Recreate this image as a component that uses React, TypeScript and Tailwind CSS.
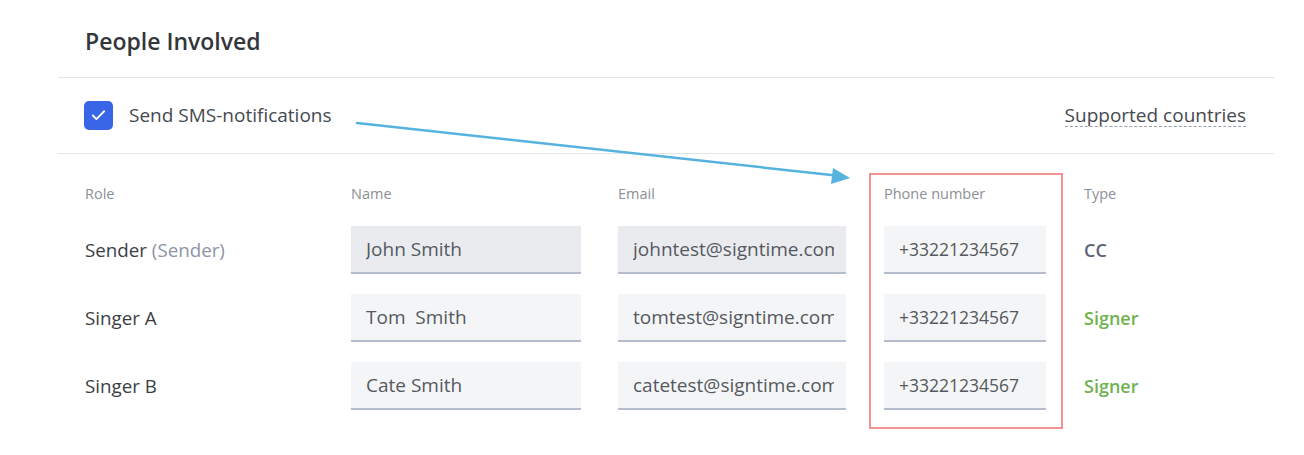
import { Check } from 'lucide-react';

type Person = {
  role: string;
  roleHint?: string;
  name: string;
  email: string;
  phone: string;
  type: 'CC' | 'Signer';
  locked?: boolean;
};

const people: Person[] = [
  {
    role: 'Sender',
    roleHint: '(Sender)',
    name: 'John Smith',
    email: 'johntest@signtime.com',
    phone: '+33221234567',
    type: 'CC',
    locked: true,
  },
  { role: 'Singer A', name: 'Tom  Smith', email: 'tomtest@signtime.com', phone: '+33221234567', type: 'Signer' },
  { role: 'Singer B', name: 'Cate Smith', email: 'catetest@signtime.com', phone: '+33221234567', type: 'Signer' },
];

function Field({
  value,
  width,
  locked,
  size = 'text-[19px]',
}: {
  value: string;
  width: string;
  locked?: boolean;
  size?: string;
}) {
  return (
    <div
      className={`${width} ${size} h-[48px] flex items-center pl-[15px] overflow-hidden border-b-2 border-[#b4bccd] text-[#55595f] ${
        locked ? 'bg-[#e9ebef]' : 'bg-[#f4f5f6]'
      }`}
    >
      <span className="block w-full overflow-hidden whitespace-pre [clip-path:inset(0_12px_0_0)]">{value}</span>
    </div>
  );
}

export default function App() {
  return (
    <div
      className="relative w-[1304px] h-[455px] bg-white text-[#3a3e44] overflow-hidden"
      style={{ fontFamily: '"Open Sans", "Noto Sans", sans-serif' }}
    >
      <div className="ml-[58px] w-[1216px]">
        <h2 className="pl-[27px] pt-[26px] pb-[21px] text-[23px] font-semibold leading-[30px] text-[#33363b]">
          People Involved
        </h2>
        <div className="h-px bg-[#e2e5ea]" />

        <div className="h-[75px] flex items-center pl-[26px] pr-[28px]">
          <span className="w-[29px] h-[29px] rounded-[5px] bg-[#3866e6] flex items-center justify-center">
            <Check className="w-[17px] h-[17px] text-white" strokeWidth={2.5} />
          </span>
          <span className="ml-[16px] text-[19px] text-[#45494f]">Send SMS-notifications</span>
          <span className="ml-auto text-[19px] text-[#45494f] leading-[22px] border-b border-dashed border-[#9aa0aa]">
            Supported countries
          </span>
        </div>
        <div className="h-px bg-[#e2e5ea]" />

        <div className="pl-[27px] pt-[29px] grid grid-cols-[266px_267px_266px_200px_1fr] gap-y-[20px] items-center">
          <div className="text-[14.5px] text-[#8b9097] h-[20px] mb-[3px]">Role</div>
          <div className="text-[14.5px] text-[#8b9097] h-[20px] mb-[3px]">Name</div>
          <div className="text-[14.5px] text-[#8b9097] h-[20px] mb-[3px]">Email</div>
          <div className="text-[14.5px] text-[#8b9097] h-[20px] mb-[3px]">Phone number</div>
          <div className="text-[14.5px] text-[#8b9097] h-[20px] mb-[3px]">Type</div>

          {people.map((p) => (
            <div key={p.role} className="contents">
              <div className="text-[18.75px] text-[#3a3e44]">
                {p.role}
                {p.roleHint && <span className="text-[#8c94a5]"> {p.roleHint}</span>}
              </div>
              <Field value={p.name} width="w-[230px]" locked={p.locked} />
              <Field value={p.email} width="w-[228px]" locked={p.locked} />
              <Field value={p.phone} width="w-[162px]" size="text-[17.5px]" />
              <div
                className={`text-[18px] font-semibold ${
                  p.type === 'CC' ? 'text-[#5b6275]' : 'text-[#6fb24e]'
                }`}
              >
                {p.type}
              </div>
            </div>
          ))}
        </div>
      </div>

      {/* annotation: highlight box and arrow drawn over the form */}
      <div className="absolute left-[869px] top-[173px] w-[194px] h-[256px] border-2 border-[#ee9292] pointer-events-none" />
      <svg className="absolute left-0 top-0 pointer-events-none" width="1304" height="455">
        <line x1="357" y1="123" x2="836" y2="175.5" stroke="#55b3de" strokeWidth="2.5" strokeLinecap="round" />
        <polygon points="850,178 833,168 831,184" fill="#55b3de" />
      </svg>
    </div>
  );
}
